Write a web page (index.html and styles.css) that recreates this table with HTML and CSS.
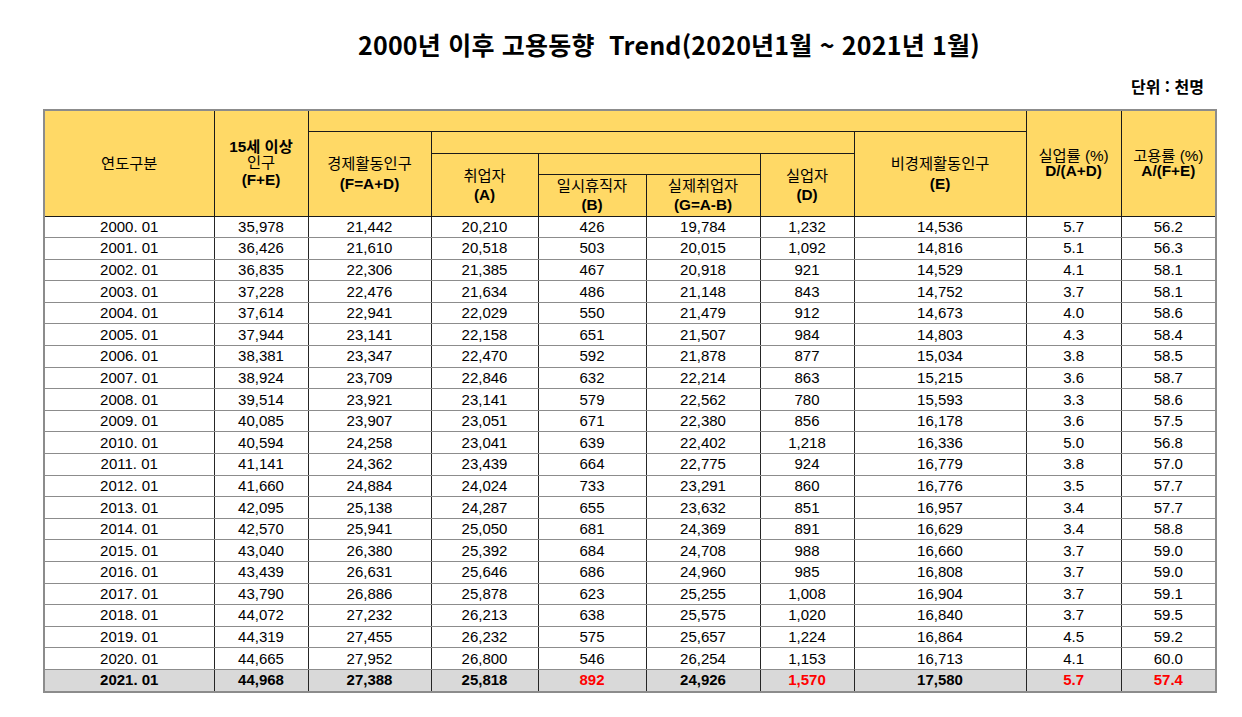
FILE: index.html
```html
<!DOCTYPE html>
<html lang="ko">
<head>
<meta charset="utf-8">
<title>2000년 이후 고용동향 Trend</title>
<link rel="stylesheet" href="styles.css">
</head>
<body>
<div class="page">
  <h1 class="title">2000년 이후 고용동향&nbsp; Trend(2020년1월 ~ 2021년 1월)</h1>
  <div class="unit">단위 : 천명</div>
  <table class="grid">
    <colgroup>
      <col class="c1"><col class="c2"><col class="c3"><col class="c4"><col class="c5">
      <col class="c6"><col class="c7"><col class="c8"><col class="c9"><col class="c10">
    </colgroup>
    <thead>
      <tr class="h1">
        <th rowspan="4">연도구분</th>
        <th rowspan="4" class="l17"><b>15세 이상</b><br>인구<br><b>(F+E)</b></th>
        <th colspan="6"></th>
        <th rowspan="4" class="l16">실업률 (%)<br><b>D/(A+D)</b></th>
        <th rowspan="4" class="l16">고용률 (%)<br><b>A/(F+E)</b></th>
      </tr>
      <tr class="h2">
        <th rowspan="3" class="l21">경제활동인구<br><b>(F=A+D)</b></th>
        <th colspan="4"></th>
        <th rowspan="3" class="l21">비경제활동인구<br><b>(E)</b></th>
      </tr>
      <tr class="h3">
        <th rowspan="2" class="l20">취업자<br><b>(A)</b></th>
        <th colspan="2"></th>
        <th rowspan="2" class="l20">실업자<br><b>(D)</b></th>
      </tr>
      <tr class="h4">
        <th class="l19">일시휴직자<br><b>(B)</b></th>
        <th class="l19">실제취업자<br><b>(G=A-B)</b></th>
      </tr>
    </thead>
    <tbody>
      <tr><td>2000. 01</td><td>35,978</td><td>21,442</td><td>20,210</td><td>426</td><td>19,784</td><td>1,232</td><td>14,536</td><td>5.7</td><td>56.2</td></tr>
      <tr><td>2001. 01</td><td>36,426</td><td>21,610</td><td>20,518</td><td>503</td><td>20,015</td><td>1,092</td><td>14,816</td><td>5.1</td><td>56.3</td></tr>
      <tr><td>2002. 01</td><td>36,835</td><td>22,306</td><td>21,385</td><td>467</td><td>20,918</td><td>921</td><td>14,529</td><td>4.1</td><td>58.1</td></tr>
      <tr><td>2003. 01</td><td>37,228</td><td>22,476</td><td>21,634</td><td>486</td><td>21,148</td><td>843</td><td>14,752</td><td>3.7</td><td>58.1</td></tr>
      <tr><td>2004. 01</td><td>37,614</td><td>22,941</td><td>22,029</td><td>550</td><td>21,479</td><td>912</td><td>14,673</td><td>4.0</td><td>58.6</td></tr>
      <tr><td>2005. 01</td><td>37,944</td><td>23,141</td><td>22,158</td><td>651</td><td>21,507</td><td>984</td><td>14,803</td><td>4.3</td><td>58.4</td></tr>
      <tr><td>2006. 01</td><td>38,381</td><td>23,347</td><td>22,470</td><td>592</td><td>21,878</td><td>877</td><td>15,034</td><td>3.8</td><td>58.5</td></tr>
      <tr><td>2007. 01</td><td>38,924</td><td>23,709</td><td>22,846</td><td>632</td><td>22,214</td><td>863</td><td>15,215</td><td>3.6</td><td>58.7</td></tr>
      <tr><td>2008. 01</td><td>39,514</td><td>23,921</td><td>23,141</td><td>579</td><td>22,562</td><td>780</td><td>15,593</td><td>3.3</td><td>58.6</td></tr>
      <tr><td>2009. 01</td><td>40,085</td><td>23,907</td><td>23,051</td><td>671</td><td>22,380</td><td>856</td><td>16,178</td><td>3.6</td><td>57.5</td></tr>
      <tr><td>2010. 01</td><td>40,594</td><td>24,258</td><td>23,041</td><td>639</td><td>22,402</td><td>1,218</td><td>16,336</td><td>5.0</td><td>56.8</td></tr>
      <tr><td>2011. 01</td><td>41,141</td><td>24,362</td><td>23,439</td><td>664</td><td>22,775</td><td>924</td><td>16,779</td><td>3.8</td><td>57.0</td></tr>
      <tr><td>2012. 01</td><td>41,660</td><td>24,884</td><td>24,024</td><td>733</td><td>23,291</td><td>860</td><td>16,776</td><td>3.5</td><td>57.7</td></tr>
      <tr><td>2013. 01</td><td>42,095</td><td>25,138</td><td>24,287</td><td>655</td><td>23,632</td><td>851</td><td>16,957</td><td>3.4</td><td>57.7</td></tr>
      <tr><td>2014. 01</td><td>42,570</td><td>25,941</td><td>25,050</td><td>681</td><td>24,369</td><td>891</td><td>16,629</td><td>3.4</td><td>58.8</td></tr>
      <tr><td>2015. 01</td><td>43,040</td><td>26,380</td><td>25,392</td><td>684</td><td>24,708</td><td>988</td><td>16,660</td><td>3.7</td><td>59.0</td></tr>
      <tr><td>2016. 01</td><td>43,439</td><td>26,631</td><td>25,646</td><td>686</td><td>24,960</td><td>985</td><td>16,808</td><td>3.7</td><td>59.0</td></tr>
      <tr><td>2017. 01</td><td>43,790</td><td>26,886</td><td>25,878</td><td>623</td><td>25,255</td><td>1,008</td><td>16,904</td><td>3.7</td><td>59.1</td></tr>
      <tr><td>2018. 01</td><td>44,072</td><td>27,232</td><td>26,213</td><td>638</td><td>25,575</td><td>1,020</td><td>16,840</td><td>3.7</td><td>59.5</td></tr>
      <tr><td>2019. 01</td><td>44,319</td><td>27,455</td><td>26,232</td><td>575</td><td>25,657</td><td>1,224</td><td>16,864</td><td>4.5</td><td>59.2</td></tr>
      <tr><td>2020. 01</td><td>44,665</td><td>27,952</td><td>26,800</td><td>546</td><td>26,254</td><td>1,153</td><td>16,713</td><td>4.1</td><td>60.0</td></tr>
      <tr class="latest"><td>2021. 01</td><td>44,968</td><td>27,388</td><td>25,818</td><td class="red">892</td><td>24,926</td><td class="red">1,570</td><td>17,580</td><td class="red">5.7</td><td class="red">57.4</td></tr>
    </tbody>
  </table>
</div>
</body>
</html>
```

FILE: styles.css
```css
html, body {
  margin: 0;
  padding: 0;
  background: #ffffff;
}

.page {
  width: 1242px;
  padding: 25px 27px 0 43px;
  box-sizing: border-box;
  font-family: "Liberation Sans", "Noto Sans CJK KR", sans-serif;
  color: #000;
}

.title {
  margin: 0 0 0 315px;
  font-family: "Noto Sans CJK KR", sans-serif;
  font-weight: 700;
  font-size: 25px;
  line-height: 38px;
  white-space: pre;
  letter-spacing: 0.2px;
}

.unit {
  margin-top: 12px;
  padding-right: 11px;
  text-align: right;
  font-family: "Noto Sans CJK KR", sans-serif;
  font-weight: 700;
  font-size: 16px;
  line-height: 22px;
}

.grid {
  margin-top: 12px;
  width: 1172px;
  border-collapse: collapse;
  table-layout: fixed;
  border: 2px solid #8c8c8c;
  font-size: 15px;
}

.c1 { width: 170px; }
.c2 { width: 94px; }
.c3 { width: 123px; }
.c4 { width: 107px; }
.c5 { width: 108px; }
.c6 { width: 114px; }
.c7 { width: 94px; }
.c8 { width: 172px; }
.c9 { width: 95px; }
.c10 { width: 95px; }

.grid th {
  background: #ffd966;
  border: 1px solid #1a1a1a;
  font-weight: 400;
  font-size: 15.3px;
  padding: 0;
  text-align: center;
  vertical-align: middle;
  line-height: 19px;
}

.grid th b { font-weight: 700; }

.grid .l16 { line-height: 15.5px; }
.grid .l17 { line-height: 16.5px; }
.grid .l19 { line-height: 19px; }
.grid .l20 { line-height: 19px; }
.grid .l21 { line-height: 20px; }

.h1 { height: 21px; }
.h2 { height: 22px; }
.h3 { height: 21px; }
.h4 { height: 42px; }

.grid td {
  height: 20.6px;
  padding: 0;
  text-align: center;
  vertical-align: middle;
  border-left: 1px solid #262626;
  border-right: 1px solid #262626;
  border-top: 1px solid #8c8c8c;
  border-bottom: 1px solid #8c8c8c;
  line-height: 18px;
  font-size: 15px;
}

.grid tbody tr:first-child td {
  border-top: 1px solid #1a1a1a;
}

.latest td {
  background: #d9d9d9;
  font-weight: 700;
  border-top: 1px solid #262626;
}

.latest .red { color: #ff0000; }
```
